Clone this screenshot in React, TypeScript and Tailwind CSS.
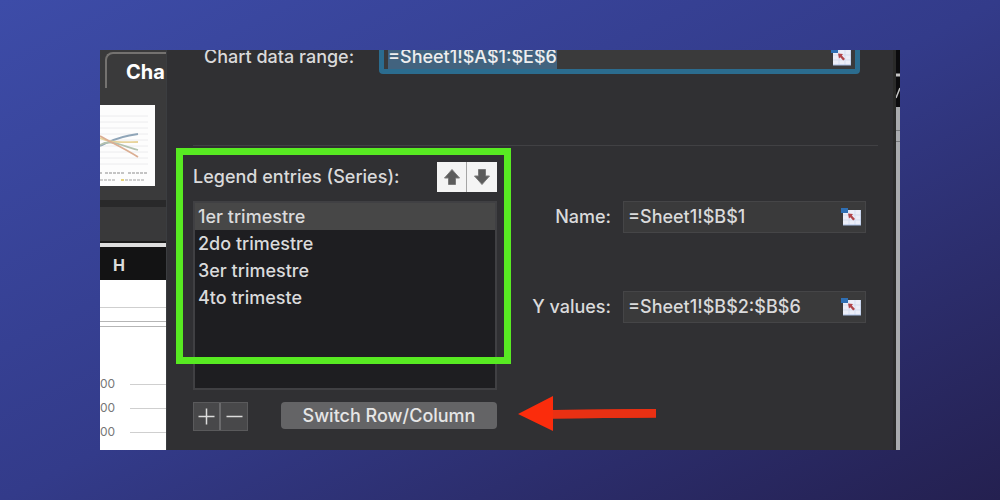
import { useEffect, useRef, useState } from "react";

const SERIES = ["1er trimestre", "2do trimestre", "3er trimestre", "4to trimeste"];

function RangeIcon() {
  return (
    <svg width="21" height="18" viewBox="0 0 21 18" aria-hidden="true">
      <rect x="3" y="2" width="18" height="15" fill="#eceef8" />
      <path d="M3 7H21M3 12H21M9 2V17M15 2V17" stroke="#d6ddf0" strokeWidth="1" />
      <path d="M3 17H21V2" stroke="#a9bfe6" strokeWidth="1" fill="none" />
      <rect x="1" y="0" width="7" height="5" fill="#2f6fb4" />
      <path d="M8 5.500L13 6L11.800 7.500L15 11L13.200 12.500L10.300 9.200L9 10.500Z" fill="#b2454a" />
    </svg>
  );
}

function BlockArrow({ down = false }: { down?: boolean }) {
  return (
    <svg width="16" height="16" viewBox="0 0 16 16" aria-hidden="true">
      <path
        d={down ? "M4.500 0.500H11.500V7H15.500L8 15.500L0.500 7H4.500Z" : "M8 0.500L15.500 9H11.500V15.500H4.500V9H0.500Z"}
        fill="#5c5c5c"
        stroke="#7a7a7a"
      />
    </svg>
  );
}

function Thumbnail() {
  return (
    <svg width="55" height="81" viewBox="0 0 55 81" aria-hidden="true">
      <rect width="55" height="81" fill="#fdfdfd" />
      <path d="M0 11H48M0 17H48M0 23H48M0 29H48M0 35H48M0 41H48M0 47H48M0 53H48M0 59H48" stroke="#ececee" />
      <g fill="none" strokeWidth="1.800">
        <path d="M0 41C8 38 14 32 38 29" stroke="#8fa5b8" />
        <path d="M0 33C10 38 20 37 38 37" stroke="#e8d49c" />
        <path d="M0 40C10 34 20 40 38 45" stroke="#b3c2b0" />
        <path d="M0 31C10 37 22 42 38 52" stroke="#dbae93" />
      </g>
      <path d="M0 68H2M5 68H24M28 68H48" stroke="#c4c4c4" strokeWidth="2" strokeDasharray="3 1" />
      <path d="M0 75H16M25 75H45" stroke="#cfcfcf" strokeWidth="2" strokeDasharray="3 1" />
      <path d="M21 75H24" stroke="#e6d27a" strokeWidth="2" />
    </svg>
  );
}

function Worksheet() {
  return (
    <aside className="flex w-[66px] shrink-0 flex-col overflow-hidden bg-white">
      <div className="flex h-[150px] flex-col bg-[#3a3a3b] pt-0.5">
        <div className="ml-[5px] h-9 rounded-tl-lg border-t-2 border-l-2 border-[#747270] pt-1 pl-[19px] text-xl leading-7 font-bold text-white">
          Cha
        </div>
        <div className="mt-[17px]">
          <Thumbnail />
        </div>
      </div>
      <div className="h-[7px] bg-[#29292a]" />
      <div className="h-[34px] bg-[#39393a]" />
      <div className="h-0.5 bg-[#1c1c1c]" />
      <div className="h-1 bg-[#dedede]" />
      <div className="h-[33px] bg-[#131314] pr-7 text-center text-base leading-9 font-bold text-[#dcdcdc]">H</div>
      <div className="h-7 border-b border-[#cfcfcf]" />
      <div className="mt-[13px] h-1.5 border-y border-[#b5b5b5]" />
      <div className="mt-[45px] flex flex-col text-xs leading-6 text-[#777]">
        {[0, 1, 2].map((row) => (
          <div key={row} className="flex items-center justify-between">
            <span>00</span>
            <span className="h-px w-9 bg-[#cfcfcf]" />
          </div>
        ))}
      </div>
    </aside>
  );
}

function RangeField({ id, label, value }: { id: string; label: string; value: string }) {
  return (
    <div className="flex items-center gap-3">
      <label htmlFor={id} className="w-[86px] shrink-0 text-right whitespace-nowrap">
        {label}
      </label>
      <div className="flex h-8 min-w-0 flex-1 items-center border border-[#454547] bg-[#3a3a3b] pr-1 pl-1">
        <input id={id} defaultValue={value} className="min-w-0 flex-1 bg-transparent outline-none" />
        <button type="button" aria-label={`Select range for ${label}`}>
          <RangeIcon />
        </button>
      </div>
    </div>
  );
}

export default function App() {
  const [selected, setSelected] = useState(0);
  const rangeRef = useRef<HTMLInputElement>(null);

  useEffect(() => {
    rangeRef.current?.focus();
    rangeRef.current?.select();
  }, []);

  return (
    <main className="min-h-screen bg-linear-to-br from-[#3d4ca8] via-[#333b8a] to-[#242050] px-[100px] py-[50px] font-['Inter',sans-serif]">
      <div className="flex overflow-hidden">
        <Worksheet />
        <section className="min-w-0 flex-1 border-l border-[#3b3d40] bg-[#303033] pb-[19px] pl-[26px] text-lg leading-6 font-medium text-[#dadadb]">
          <div className="-mt-[10px] mr-[33px] flex items-center pl-[11px]">
            <label htmlFor="range" className="w-[175px] shrink-0 leading-[14px]">
              Chart data range:
            </label>
            <div className="flex h-[34px] min-w-0 flex-1 items-center rounded border-[5px] border-[#2b6c8f] bg-[#3a3a3b] pr-1 pl-1">
              <input
                id="range"
                ref={rangeRef}
                defaultValue="=Sheet1!$A$1:$E$6"
                className="min-w-0 flex-1 bg-transparent outline-none selection:bg-[#42637f] selection:text-[#eeeeef]"
              />
              <button type="button" aria-label="Select chart data range">
                <RangeIcon />
              </button>
            </div>
          </div>

          <hr className="mt-[71px] mr-[15px] border-[#414144]" />

          <div className="mt-4 flex gap-[28px] pr-[27px]">
            <div className="relative w-[304px] shrink-0">
              <div className="flex items-center justify-between">
                <h2 id="legend-title">Legend entries (Series):</h2>
                <div className="flex h-[30px] divide-x divide-[#a5a5a5] bg-[#f4f4f4]">
                  <button type="button" aria-label="Move up" className="flex w-[30px] items-center justify-center">
                    <BlockArrow />
                  </button>
                  <button type="button" aria-label="Move down" className="flex w-[30px] items-center justify-center">
                    <BlockArrow down />
                  </button>
                </div>
              </div>
              <ul
                role="listbox"
                aria-labelledby="legend-title"
                className="mt-[9px] h-[189px] border-2 border-[#404043] bg-[#1e1e21]"
              >
                {SERIES.map((name, i) => (
                  <li
                    key={name}
                    role="option"
                    aria-selected={i === selected}
                    onClick={() => setSelected(i)}
                    className={i === selected ? "bg-[#474747] pl-[3px] leading-[27px]" : "pl-[3px] leading-[27px]"}
                  >
                    {name}
                  </li>
                ))}
              </ul>
              <div className="mt-3 flex items-start justify-between">
                <div className="flex h-[29px] divide-x-2 divide-[#6a6a6c] border border-[#5a5a5c] bg-[#48484a]">
                  <button type="button" aria-label="Add series" className="flex w-[27px] items-center justify-center">
                    <svg width="17" height="17" viewBox="0 0 17 17" aria-hidden="true">
                      <path d="M8.500 0.500V16.500M0.500 8.500H16.500" stroke="#dcdcdc" strokeWidth="1.500" />
                    </svg>
                  </button>
                  <button type="button" aria-label="Remove series" className="flex w-[26px] items-center justify-center">
                    <svg width="17" height="17" viewBox="0 0 17 17" aria-hidden="true">
                      <path d="M0.500 8.500H16.500" stroke="#dcdcdc" strokeWidth="1.500" />
                    </svg>
                  </button>
                </div>
                <button type="button" className="h-[27px] w-[216px] rounded bg-[#646466] text-[#e6e6e6]">
                  Switch Row/Column
                </button>
              </div>
              <div className="pointer-events-none absolute -top-[14px] -left-[17px] h-[216px] w-[335px] border-[7px] border-[#58ea22]" />
              <svg
                className="pointer-events-none absolute bottom-0 left-[325px]"
                width="139"
                height="36"
                viewBox="0 0 139 36"
                aria-hidden="true"
              >
                <path d="M0 19L35 1V15L138 14V22.500L35 23.500V36Z" fill="#fb2c0c" />
                <path d="M35 15L138 14V22.500L35 23.500Z" fill="#e93013" />
              </svg>
            </div>
            <div className="flex min-w-0 flex-1 flex-col gap-[58px] pt-[39px]">
              <RangeField id="name" label="Name:" value="=Sheet1!$B$1" />
              <RangeField id="y-values" label="Y values:" value="=Sheet1!$B$2:$B$6" />
            </div>
          </div>
        </section>
        <div className="flex w-[7px] shrink-0 flex-col border-l-[3px] border-[#2a2a29] bg-[#a9abae]">
          <svg width="4" height="57" viewBox="0 0 4 57" aria-hidden="true">
            <rect width="4" height="57" fill="#0b0b0d" />
            <path d="M0 25H4" stroke="#c4c4c4" strokeWidth="3" />
            <path d="M0 48L4 38" stroke="#c4c4c4" strokeWidth="1.500" />
          </svg>
          <div className="mt-[23px] h-3 border-y border-[#77797c]" />
        </div>
      </div>
    </main>
  );
}
